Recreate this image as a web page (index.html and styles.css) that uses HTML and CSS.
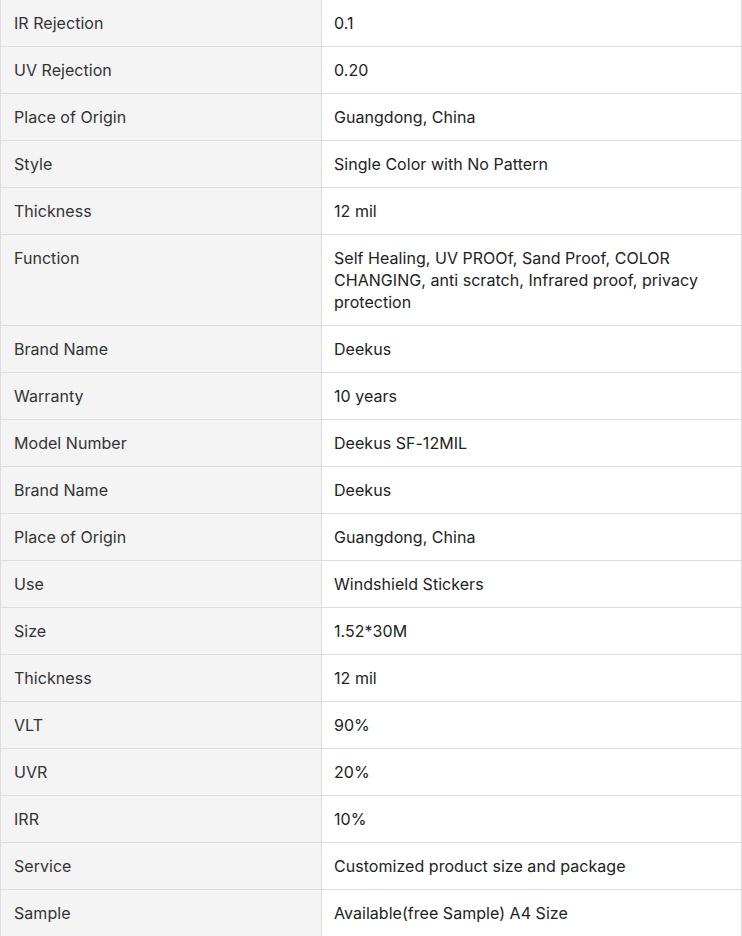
FILE: index.html
```html
<!DOCTYPE html>
<html>
<head>
<meta charset="utf-8">
<link rel="stylesheet" href="styles.css">
</head>
<body>
<table class="spec">
<tbody>
<tr><td class="k">IR Rejection</td><td class="v">0.1</td></tr>
<tr><td class="k">UV Rejection</td><td class="v">0.20</td></tr>
<tr><td class="k">Place of Origin</td><td class="v">Guangdong, China</td></tr>
<tr><td class="k">Style</td><td class="v">Single Color with No Pattern</td></tr>
<tr><td class="k">Thickness</td><td class="v">12 mil</td></tr>
<tr><td class="k">Function</td><td class="v">Self Healing, UV PROOf, Sand Proof, COLOR CHANGING, anti scratch, Infrared proof, privacy protection</td></tr>
<tr><td class="k">Brand Name</td><td class="v">Deekus</td></tr>
<tr><td class="k">Warranty</td><td class="v">10 years</td></tr>
<tr><td class="k">Model Number</td><td class="v">Deekus SF-12MIL</td></tr>
<tr><td class="k">Brand Name</td><td class="v">Deekus</td></tr>
<tr><td class="k">Place of Origin</td><td class="v">Guangdong, China</td></tr>
<tr><td class="k">Use</td><td class="v">Windshield Stickers</td></tr>
<tr><td class="k">Size</td><td class="v">1.52*30M</td></tr>
<tr><td class="k">Thickness</td><td class="v">12 mil</td></tr>
<tr><td class="k">VLT</td><td class="v">90%</td></tr>
<tr><td class="k">UVR</td><td class="v">20%</td></tr>
<tr><td class="k">IRR</td><td class="v">10%</td></tr>
<tr><td class="k">Service</td><td class="v">Customized product size and package</td></tr>
<tr><td class="k">Sample</td><td class="v">Available(free Sample) A4 Size</td></tr>
</tbody>
</table>
</body>
</html>
```
FILE: styles.css
```css
html, body {
  margin: 0;
  padding: 0;
  background: #fff;
}
.spec {
  width: 742px;
  border-collapse: collapse;
  table-layout: fixed;
  font-family: Inter, "Noto Sans", sans-serif;
  font-size: 16px;
  line-height: 22px;
  letter-spacing: 0.04px;
}
.spec td {
  border: 1px solid #dddddd;
  padding: 12px;
  vertical-align: top;
}
.spec tr:first-child td {
  border-top: none;
}
.spec .k {
  width: 295px;
  padding-left: 13px;
  background: #f4f4f4;
  color: #333333;
}
.spec .v {
  background: #fff;
  color: #222222;
}
```
